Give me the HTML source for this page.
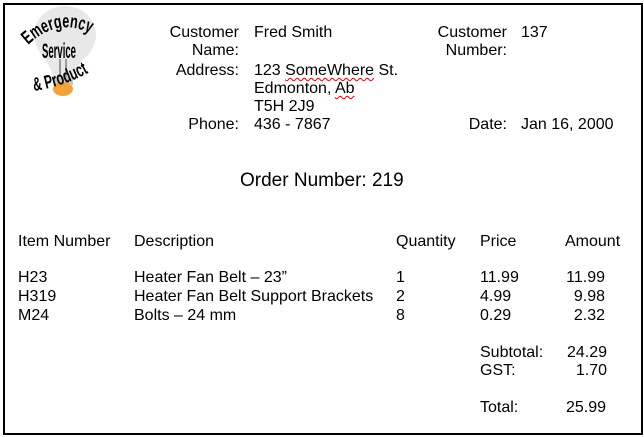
<!DOCTYPE html>
<html><head><style>
body{margin:0;width:644px;height:437px;background:#fff;overflow:hidden;font-family:"Liberation Sans",Arial,sans-serif;font-size:16px;color:#000}
.b{position:absolute;left:3px;top:3px;width:636px;height:428px;border:2px solid #000}
.t{position:absolute;line-height:18px;white-space:nowrap}
.r{text-align:right}
.sq{text-decoration:underline wavy #d00;text-decoration-thickness:1px;text-underline-offset:2px}
</style></head><body>
<div class="b"></div>
<svg style="position:absolute;left:20px;top:3px" width="84" height="96" viewBox="0 0 84 96">
<defs>
<path id="a1" d="M8 42 Q42 10 80 36"/>
<path id="a2" d="M14 88 Q42 84 68 70"/>
</defs>
<ellipse cx="45" cy="32" rx="31" ry="29" fill="#e8e8e8"/>
<path d="M20 50 Q32 64 33 76 L53 76 Q54 64 70 50 Z" fill="#e8e8e8"/>
<rect x="33" y="74" width="20" height="8" fill="#c8c8c8"/>
<ellipse cx="43" cy="86" rx="10" ry="7" fill="#f2a33a"/>
<path d="M40 56 L40 74 M46 56 L46 74" stroke="#999" stroke-width="2"/>
<text font-family="Liberation Sans" font-weight="bold" font-size="19"><textPath href="#a1" textLength="68" lengthAdjust="spacingAndGlyphs">Emergency</textPath></text>
<text x="39" y="55" font-family="Liberation Sans" font-weight="bold" font-size="21" text-anchor="middle" textLength="34" lengthAdjust="spacingAndGlyphs">Service</text>
<text font-family="Liberation Sans" font-weight="bold" font-size="19"><textPath href="#a2" textLength="58" lengthAdjust="spacingAndGlyphs">&amp; Product</textPath></text>
</svg>
<div class="t r" style="left:140px;width:99px;top:24px">Customer<br>Name:</div>
<div class="t" style="left:254px;top:24px">Fred Smith</div>
<div class="t r" style="left:140px;width:99px;top:62px">Address:</div>
<div class="t" style="left:254px;top:62px">123 <span class="sq">SomeWhere</span> St.<br>Edmonton, <span class="sq">Ab</span><br>T5H 2J9</div>
<div class="t r" style="left:140px;width:99px;top:116px">Phone:</div>
<div class="t" style="left:254px;top:116px">436 - 7867</div>
<div class="t r" style="left:400px;width:107px;top:24px">Customer<br>Number:</div>
<div class="t" style="left:521px;top:24px">137</div>
<div class="t r" style="left:400px;width:107px;top:116px">Date:</div>
<div class="t" style="left:521px;top:116px">Jan 16, 2000</div>
<div class="t" style="left:240px;top:171px;font-size:19px;line-height:20px">Order Number: 219</div>
<div class="t" style="left:18px;top:233px">Item Number</div>
<div class="t" style="left:134px;top:233px">Description</div>
<div class="t" style="left:396px;top:233px">Quantity</div>
<div class="t" style="left:480px;top:233px">Price</div>
<div class="t" style="left:565px;top:233px">Amount</div>
<div class="t" style="left:18px;top:268px;line-height:19px">H23<br>H319<br>M24</div>
<div class="t" style="left:134px;top:268px;line-height:19px">Heater Fan Belt – 23”<br>Heater Fan Belt Support Brackets<br>Bolts – 24 mm</div>
<div class="t" style="left:396px;top:268px;line-height:19px">1<br>2<br>8</div>
<div class="t" style="left:480px;top:268px;line-height:19px">11.99<br>4.99<br>0.29</div>
<div class="t r" style="left:540px;width:65px;top:268px;line-height:19px">11.99<br>9.98<br>2.32</div>
<div class="t" style="left:480px;top:344px">Subtotal:<br>GST:</div>
<div class="t r" style="left:540px;width:67px;top:344px">24.29<br>1.70</div>
<div class="t" style="left:480px;top:399px">Total:</div>
<div class="t r" style="left:540px;width:66px;top:399px">25.99</div>
</body></html>
